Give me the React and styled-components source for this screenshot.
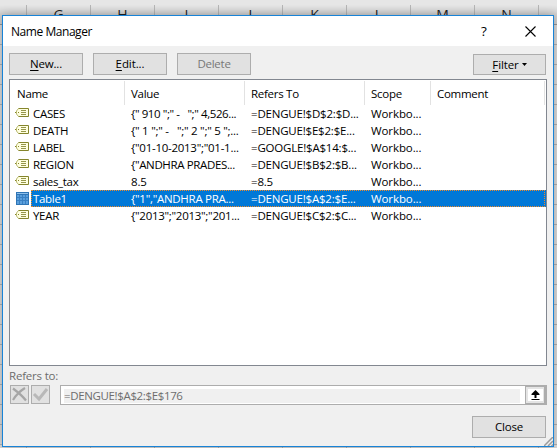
import React from 'react';
import styled, { createGlobalStyle } from 'styled-components';

const Global = createGlobalStyle`
  * { box-sizing: border-box; }
  html, body { margin: 0; overflow: hidden; }
  body { font: 11.5px/17px "Open Sans", "Noto Sans", sans-serif; color: #000; }
`;

const Sheet = styled.div`
  position: relative;
  width: 557px;
  height: 448px;
  overflow: hidden;
  background: repeating-linear-gradient(to bottom, transparent 0 19px, #b3b3b3 19px 20px) 0 25px,
    repeating-linear-gradient(to right, #b3b3b3 0 1px, transparent 1px 64px) 26px 0, #dcdcdc;
`;

const ColumnHeads = styled.div`
  display: flex;
  height: 25px;
  padding: 5px 0 0 26px;
  background: linear-gradient(to bottom, #e6e6e6 0 5px, #d2d2d2 15px);
  border-bottom: 1px solid #999;
`;

const ColumnHead = styled.div`
  flex: 0 0 64px;
  border-left: 1px solid #b5b5b5;
  text-align: center;
  font: 14px/19px "Open Sans", sans-serif;
  color: #222;
`;

const Dialog = styled.section`
  position: absolute;
  left: 2px;
  top: 15px;
  width: 552px;
  height: 432px;
  display: flex;
  flex-direction: column;
  background: #f0f0f0;
  border: 1px solid #1883d7;
  box-shadow: 0 0 9px rgba(0, 0, 0, 0.3);
`;

const TitleBar = styled.header`
  display: flex;
  align-items: center;
  height: 30px;
  padding: 0 17px 0 8px;
  background: #fff;
`;

const Text = styled.span`
  white-space: pre;
  letter-spacing: ${p => p.$ls || 0}px;
`;

const Title = styled.h1`
  flex: 1;
  margin: 0;
  font-size: 12px;
  font-weight: 400;
  letter-spacing: -0.45px;
`;

const Help = styled.span`
  width: 44px;
  font-size: 13.5px;
`;

const Toolbar = styled.div`
  display: flex;
  align-items: flex-end;
  gap: 10px;
  height: 29px;
  padding: 0 7px 0 6px;
`;

const Button = styled.button`
  display: flex;
  align-items: center;
  justify-content: center;
  gap: 3px;
  width: ${p => p.$w || 74}px;
  height: ${p => p.$h || 22}px;
  margin: 0;
  margin-left: ${p => (p.$end ? 'auto' : 0)};
  padding: 0 0 1px;
  font: inherit;
  color: ${p => (p.disabled ? '#777' : '#000')};
  background: #e1e1e1;
  border: 1px solid #adadad;
`;

const Key = styled.span`
  text-decoration: underline;
  text-underline-offset: 2px;
`;

const List = styled.div`
  height: 287px;
  margin: 4px 6px 0;
  background: #fff;
  border: 1px solid #828790;
`;

const HeadRow = styled.div`
  display: grid;
  grid-template-columns: 115px 120px 120px 66px 1fr;
  height: 25px;
  padding: 1px 1px 0 0;
`;

const HeadCell = styled.div`
  height: 24px;
  padding: 4px 0 0 6px;
  border-right: 1px solid #e2e2e2;

  &:first-child {
    padding-left: 7px;
  }
`;

const Row = styled.div`
  display: grid;
  grid-template-columns: 21px 94px 120px 120px 66px 1fr;
  height: 17px;
  padding-right: 1px;
  position: relative;
  color: ${p => (p.$selected ? '#fff' : '#000')};
  background: ${p => (p.$selected ? 'linear-gradient(to right, #fff 21px, #0078d7 21px)' : 'none')};
`;

const Focus = styled.div`
  position: absolute;
  inset: 0 1px 0 21px;
  border: 1px dotted #f08a28;
`;

const Cell = styled.div`
  padding-left: ${p => (p.$first ? 2 : 6)}px;
  white-space: pre;
`;

const IconCell = styled.div`
  padding: ${p => (p.$table ? '2px 0 0 6px' : '3px 0 0 5px')};
  svg { display: block; }
`;

const RefersLabel = styled.div`
  height: 19px;
  padding: 1px 6px 0;
  color: #6d6d6d;
`;

const RefersRow = styled.div`
  display: flex;
  height: 20px;
  padding: 0 6px 0 7px;
`;

const Tool = styled.button`
  width: 19px;
  height: 19px;
  margin: 0 2px 0 0;
  padding: 0;
  background: #e1e1e1;
  border: 1px solid #adadad;
  svg { display: block; }
`;

const Field = styled.div`
  flex: 1;
  display: flex;
  margin-left: 8px;
  background: #fff;
  border: 1px solid #adadad;
`;

const FieldValue = styled.div`
  flex: 1;
  height: 14px;
  margin: 3px 5px 0 3px;
  background: #f0f0f0;
  color: #6d6d6d;
  line-height: 14px;
`;

const Collapse = styled.div`
  width: 21px;
  height: 18px;
  padding: 1px 0 0 2px;
  background: #e4e4e4;
  border: 1px solid #adadad;
  border-right-width: 2px;
  svg { display: block; }
`;

const Footer = styled.footer`
  display: flex;
  justify-content: flex-end;
  padding: 11px 7px 0;
`;

const Grip = styled.svg`
  position: absolute;
  right: 0;
  bottom: 0;
`;

const TagIcon = () => (
  <svg width="15" height="10" viewBox="0 0 15 10" fill="none">
    <path d="M3.500.5h10v8h-10l-2-2.500v-3z" fill="#ffffe0" />
    <path d="M3.500.5L1.500 3v3l2 2.500" stroke="#b9b970" />
    <path d="M3.500.5h10M3.500 8.500h10V.5" stroke="#85852c" />
    <path d="M6 2.500h5M6 4.500h5M6 6.500h5" stroke="#96964a" />
    <path d="M0 4.500h1M3 4.500h1" stroke="#85852c" />
  </svg>
);

const TableIcon = () => (
  <svg width="13" height="13" viewBox="0 0 13 13" shapeRendering="crispEdges">
    <path fill="#5a9fdc" d="M0 0h13v13H0z" />
    <path fill="#2f75b5" d="M0 0h13v1H0zM0 2h13v1H0z" />
    <path fill="#8fc0ea" d="M1 1h11v1H1z" />
    <path fill="#3a80c2" d="M1 5h11v1H1zM1 8h11v1H1zM3 3h1v9H3zM6 3h1v9H6zM9 3h1v9H9z" />
    <path d="M.5.5h12v12H.5z" fill="none" stroke="#2f75b5" />
  </svg>
);

const rows = [
  ['CASES', '{" 910 ";" -   ";" 4,526...', '=DENGUE!$D$2:$D...', -0.4],
  ['DEATH', '{" 1 ";" -   ";" 2 ";" 5 ";...', '=DENGUE!$E$2:$E...', -0.26],
  ['LABEL', '{"01-10-2013";"01-1...', '=GOOGLE!$A$14:$...', -0.27],
  ['REGION', '{"ANDHRA PRADES...', '=DENGUE!$B$2:$B...', -0.36],
  ['sales_tax', '8.5', '=8.5', -0.15],
  ['Table1', '{"1","ANDHRA PRA...', '=DENGUE!$A$2:$E...', -0.28],
  ['YEAR', '{"2013";"2013";"201...', '=DENGUE!$C$2:$C...', -0.28],
];

export default function App() {
  return (
    <Sheet>
      <Global />
      <ColumnHeads>
        {['G', 'H', 'I', 'J', 'K', 'L', 'M', 'N', ''].map((c, i) => <ColumnHead key={i}>{c}</ColumnHead>)}
      </ColumnHeads>
      <Dialog>
        <TitleBar>
          <Title>Name Manager</Title>
          <Help>?</Help>
          <svg width="11" height="11" viewBox="0 0 11 11" stroke="#000" strokeWidth="1.1"><path d="M.5.5l10 10M10.5.5l-10 10" /></svg>
        </TitleBar>
        <Toolbar>
          <Button><Text $ls={-0.2}><Key>N</Key>ew...</Text></Button>
          <Button><Text $ls={-0.1}><Key>E</Key>dit...</Text></Button>
          <Button disabled><Text $ls={-0.25}>Delete</Text></Button>
          <Button $w={73} $h={21} $end>
            <Text $ls={-0.1}><Key>F</Key>ilter</Text>
            <svg width="5" height="3"><path d="M0 0h5L2.5 3z" /></svg>
          </Button>
        </Toolbar>
        <List>
          <HeadRow>
            {['Name', 'Value', 'Refers To', 'Scope', 'Comment'].map(h => (
              <HeadCell key={h}><Text $ls={-0.28}>{h}</Text></HeadCell>
            ))}
          </HeadRow>
          {rows.map(([name, value, refers, spacing]) => {
            const selected = name === 'Table1';
            return (
              <Row key={name} $selected={selected}>
                <IconCell $table={selected}>{selected ? <TableIcon /> : <TagIcon />}</IconCell>
                <Cell $first><Text $ls={-0.32}>{name}</Text></Cell>
                <Cell><Text $ls={spacing}>{value}</Text></Cell>
                <Cell><Text $ls={-0.2}>{refers}</Text></Cell>
                <Cell><Text $ls={-0.1}>Workbo...</Text></Cell>
                {selected && <Focus />}
              </Row>
            );
          })}
        </List>
        <RefersLabel><Text $ls={-0.2}>Refers to:</Text></RefersLabel>
        <RefersRow>
          <Tool disabled><svg width="17" height="17" fill="none" stroke="#a6a6a6" strokeWidth="2.2"><path d="M2 2.5c4 3 9 7 13 12M14 2C9 5 5 9 2 14" /></svg></Tool>
          <Tool disabled><svg width="17" height="17" fill="none" stroke="#b8b8b8" strokeWidth="3"><path d="M2 8l5 5L15 3" /></svg></Tool>
          <Field>
            <FieldValue><Text $ls={-0.36}>=DENGUE!$A$2:$E$176</Text></FieldValue>
            <Collapse>
              <svg width="15" height="14"><path fill="#fff" d="M0 1h15v12H0z" /><path d="M7.500 2l4 4v1H8.500v3h-2V7h-3V6zM3.500 11h8v1h-8z" /></svg>
            </Collapse>
          </Field>
        </RefersRow>
        <Footer><Button><Text $ls={-0.2}>Close</Text></Button></Footer>
        <Grip width="9" height="9" stroke="#9c9c9c" strokeWidth="1.5"><path d="M0 9L9 0M4 9L9 4M7.500 9L9 7.500" /></Grip>
      </Dialog>
    </Sheet>
  );
}
